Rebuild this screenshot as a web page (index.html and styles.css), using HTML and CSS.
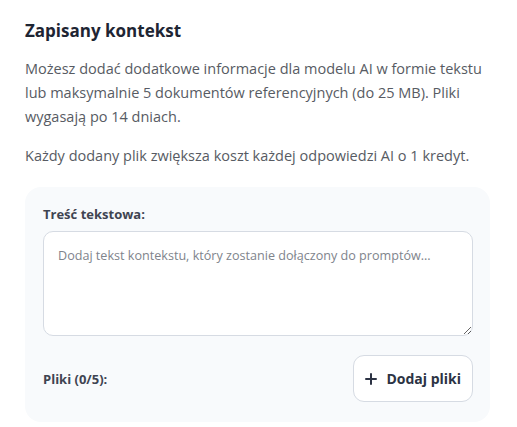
FILE: index.html
```html
<!DOCTYPE html>
<html lang="pl">
<head>
<meta charset="utf-8">
<link rel="stylesheet" href="styles.css">
</head>
<body>
<section class="panel">
  <h2 class="title">Zapisany kontekst</h2>
  <p class="desc">Możesz dodać dodatkowe informacje dla modelu AI w formie tekstu lub maksymalnie 5 dokumentów referencyjnych (do 25 MB). Pliki wygasają po 14 dniach.</p>
  <p class="desc note">Każdy dodany plik zwiększa koszt każdej odpowiedzi AI o 1 kredyt.</p>
  <div class="card">
    <label class="label" for="ctx">Treść tekstowa:</label>
    <textarea id="ctx" class="area" placeholder="Dodaj tekst kontekstu, który zostanie dołączony do promptów..."></textarea>
    <div class="files">
      <span class="label">Pliki (0/5):</span>
      <button class="btn" type="button">
        <svg class="plus" viewBox="0 0 12 12" width="12" height="12"><path d="M6 1v10M1 6h10" stroke="currentColor" stroke-width="2" stroke-linecap="round"/></svg>
        <span>Dodaj pliki</span>
      </button>
    </div>
  </div>
</section>
</body>
</html>
```
FILE: styles.css
```css
* { box-sizing: border-box; }
body {
  margin: 0;
  background: #ffffff;
  font-family: "Open Sans", "Noto Sans", sans-serif;
}
.panel {
  padding: 19px 27px 0 25px;
}
.title {
  margin: 0 0 14px;
  font-size: 17px;
  font-weight: 700;
  color: #1e2533;
  line-height: 24px;
}
.desc {
  margin: 0;
  font-size: 14.5px;
  line-height: 24px;
  color: #575b63;
}
.note {
  margin-top: 15px;
}
.card {
  margin-top: 19px;
  background: #f8fafc;
  border-radius: 16px;
  padding: 17px 17px 20px 18px;
  display: flex;
  flex-direction: column;
}
.label {
  font-size: 13px;
  font-weight: 700;
  color: #3f4451;
  line-height: 20px;
}
.area {
  margin-top: 7px;
  height: 105px;
  resize: vertical;
  border: 1px solid #d6dbe3;
  border-radius: 10px;
  background: #fff;
  padding: 15px 10px 12px 14px;
  font-family: inherit;
  font-size: 12.6px;
  color: #374151;
  outline: none;
}
.area::placeholder {
  color: #80848c;
}
.files {
  margin-top: 19px;
  display: flex;
  align-items: center;
  justify-content: space-between;
}
.btn {
  display: flex;
  align-items: center;
  gap: 9px;
  height: 47px;
  padding: 0 11px;
  border: 1px solid #d6dbe3;
  border-radius: 11px;
  background: #fff;
  font-family: inherit;
  font-size: 14px;
  font-weight: 700;
  color: #2c3344;
}
.plus { color: #2c3344; }
```
